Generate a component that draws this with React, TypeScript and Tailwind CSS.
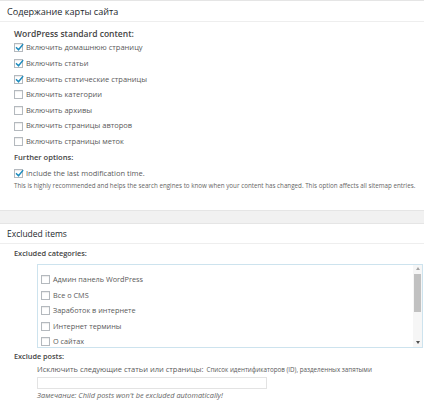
import React from "react";

function Box({ checked = false }: { checked?: boolean }) {
  return (
    <span className="relative flex h-[9px] w-[9px] shrink-0 items-center justify-center border border-[#b4b9be] bg-white shadow-[inset_0_1px_1px_rgba(0,0,0,0.08)]">
      {checked && (
        <svg viewBox="0 0 10 10" className="absolute left-[0px] top-[-1px] h-[9px] w-[9px]">
          <path d="M1.6 5.2 L3.9 7.6 L8.6 1.8" fill="none" stroke="#1e8cbe" strokeWidth="1.7" strokeLinecap="round" strokeLinejoin="round" />
        </svg>
      )}
    </span>
  );
}

function Row({ label, checked }: { label: string; checked?: boolean }) {
  return (
    <label className="flex h-[15.67px] items-center gap-[3px] text-[7.5px] text-[#5a5a5a]">
      <Box checked={checked} />
      <span>{label}</span>
    </label>
  );
}

const standard = [
  { label: "Включить домашнюю страницу", checked: true },
  { label: "Включить статьи", checked: true },
  { label: "Включить статические страницы", checked: true },
  { label: "Включить категории" },
  { label: "Включить архивы" },
  { label: "Включить страницы авторов" },
  { label: "Включить страницы меток" },
];

const cats = ["Админ панель WordPress", "Все о CMS", "Заработок в интернете", "Интернет термины", "О сайтах"];

export default function App() {
  return (
    <div className="h-[407px] w-[424px] overflow-hidden bg-[#f1f1f1] font-['Open_Sans',sans-serif] text-[#444]">
      {/* Sitemap content panel */}
      <div className="h-[211px] border-y border-[#e5e5e5] bg-white">
        <div className="flex h-[21px] items-center border-b border-[#eeeeee] pl-[7px] pt-[2px] text-[9.1px] text-[#23282d]">
          Содержание карты сайта
        </div>
        <div className="pl-[14px]">
          <div className="mt-[6px] flex h-[12px] items-center text-[8.5px] font-semibold text-[#444]">WordPress standard content:</div>
          {standard.map((s) => (
            <Row key={s.label} label={s.label} checked={s.checked} />
          ))}
          <div className="flex h-[16px] items-center text-[7.6px] font-semibold text-[#444]">Further options:</div>
          <label className="flex h-[16px] items-center gap-[3px] text-[7.5px] text-[#5a5a5a]">
            <Box checked />
            <span>Include the last modification time.</span>
          </label>
          <div className="flex h-[9px] items-center whitespace-nowrap text-[6.25px] text-[#666]">
            This is highly recommended and helps the search engines to know when your content has changed. This option affects all sitemap entries.
          </div>
        </div>
      </div>

      {/* Excluded items panel */}
      <div className="mt-[12px] h-[200px] border-t border-[#e5e5e5] bg-white">
        <div className="flex h-[20px] items-center border-b border-[#eeeeee] pl-[7px] pt-[1px] text-[8.5px] text-[#23282d]">
          Excluded items
        </div>
        <div className="pl-[14px]">
          <div className="flex h-[20px] items-center text-[7.4px] font-semibold text-[#444]">Excluded categories:</div>
          <div className="ml-[23px] flex h-[84px] w-[386px] border border-[#cde3ee] bg-white">
            <div className="flex-1 overflow-hidden pl-[3px] pt-[7px]">
              {cats.map((c) => (
                <label key={c} className="flex h-[15.5px] items-center gap-[3px] text-[7.3px] text-[#5a5a5a]">
                  <Box />
                  <span>{c}</span>
                </label>
              ))}
            </div>
            <div className="flex w-[9px] flex-col items-center bg-[#f6f6f6] py-[1px]">
              <span className="mt-[1px] h-0 w-0 border-x-[2px] border-b-[3px] border-x-transparent border-b-[#a3a3a3]" />
              <div className="mt-[4px] h-[38px] w-[7px] bg-[#c1c1c1]" />
              <div className="flex-1" />
              <span className="mb-[2px] h-0 w-0 border-x-[2px] border-t-[3px] border-x-transparent border-t-[#505050]" />
            </div>
          </div>
          <div className="flex h-[16px] items-center text-[7.3px] font-semibold text-[#444]">Exclude posts:</div>
          <div className="ml-[23px]">
            <div className="flex h-[12px] items-center whitespace-nowrap text-[7.5px] text-[#5a5a5a]">
              Исключить следующие статьи или страницы:<span className="ml-[3px] text-[6.25px]">Список идентификаторов (ID), разделенных запятыми</span>
            </div>
            <div className="mt-[1px] h-[12px] w-[230px] border border-[#e3e3e3] bg-white" />
            <div className="flex h-[13px] items-center text-[7.4px] italic text-[#666]">
              Замечание: Child posts won't be excluded automatically!
            </div>
          </div>
        </div>
      </div>
    </div>
  );
}
